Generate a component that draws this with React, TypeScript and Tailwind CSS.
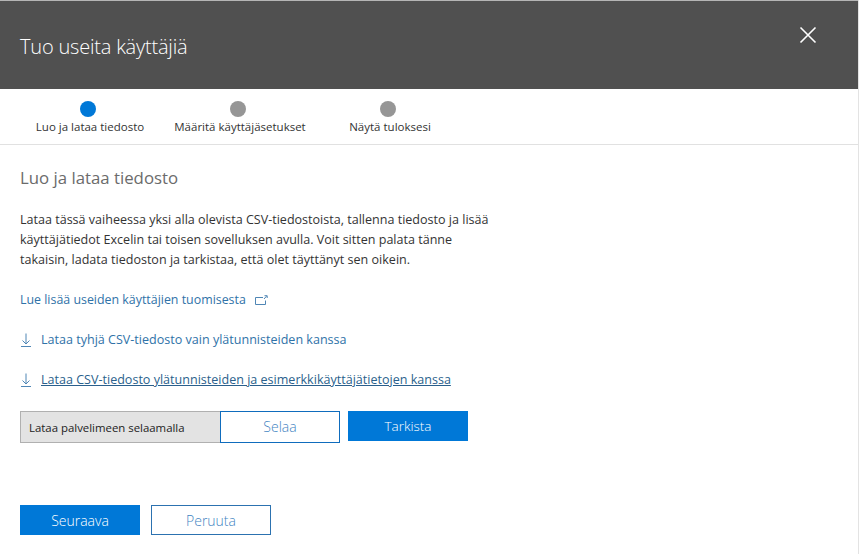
const font = { fontFamily: '"Open Sans", "Noto Sans", sans-serif' };

function DownloadIcon() {
  return (
    <svg width="10" height="14" viewBox="0 0 10 14" fill="none" stroke="#4f86b5" strokeWidth="1" className="shrink-0 ml-px">
      <path d="M5 0.5V11M1.5 7.5L5 11L8.5 7.5M0 13.5H10" />
    </svg>
  );
}

function Step({ label, active }: { label: string; active?: boolean }) {
  return (
    <div className="w-[150px] flex flex-col items-center">
      <div className={`w-4 h-4 mr-1 rounded-full ${active ? "bg-[#0078d7]" : "bg-[#969696]"}`} />
      <div className="mt-px text-[11.5px] leading-[17px] text-[#333] whitespace-nowrap">{label}</div>
    </div>
  );
}

export default function App() {
  return (
    <div className="w-[859px] h-[554px] bg-white overflow-hidden border-r border-[#e3e3e3]" style={font}>
      <header className="h-[89px] bg-[#505050] border-t border-[#b5b5b5] flex items-start justify-between pl-5 pr-[41px]">
        <h1 className="mt-[31px] text-[20px] leading-[30px] font-light text-white tracking-[-0.2px]">Tuo useita käyttäjiä</h1>
        <svg width="18" height="18" viewBox="0 0 18 18" fill="none" stroke="#fff" strokeWidth="1.6" className="mt-[25px]">
          <path d="M1.5 1.5L16.5 16.5M16.5 1.5L1.5 16.5" />
        </svg>
      </header>
      <div className="h-[56px] border-b border-[#e1e1e1] flex pl-[15px] pt-[12px]">
        <Step label="Luo ja lataa tiedosto" active />
        <Step label="Määritä käyttäjäsetukset" />
        <Step label="Näytä tuloksesi" />
      </div>
      <main className="pl-5">
        <h2 className="mt-[21px] text-[16.8px] leading-[24px] text-[#6b6b6b]">Luo ja lataa tiedosto</h2>
        <p className="mt-[20px] w-[490px] text-[12.55px] leading-[20px] text-[#333]">
          Lataa tässä vaiheessa yksi alla olevista CSV-tiedostoista, tallenna tiedosto ja lisää<br />
          käyttäjätiedot Excelin tai toisen sovelluksen avulla. Voit sitten palata tänne<br />
          takaisin, ladata tiedoston ja tarkistaa, että olet täyttänyt sen oikein.
        </p>
        <a className="mt-[20px] flex items-center gap-[9px] text-[12.4px] leading-[20px] text-[#2f72a8]">
          Lue lisää useiden käyttäjien tuomisesta
          <svg width="13" height="10" viewBox="0 0 13 10" fill="none" stroke="#4f86b5" strokeWidth="1">
            <path d="M8 2.5H0.5V9.5H10.5V5.5M9 4L11.5 1.2M9.5 0.7H12.2V3" />
          </svg>
        </a>
        <a className="mt-[20px] flex items-center gap-[10px] text-[12.55px] leading-[20px] text-[#2f72a8]">
          <DownloadIcon />
          Lataa tyhjä CSV-tiedosto vain ylätunnisteiden kanssa
        </a>
        <a className="mt-[20px] flex items-center gap-[10px] text-[12.55px] leading-[20px] text-[#2a5f8c]">
          <DownloadIcon />
          <span className="underline">Lataa CSV-tiedosto ylätunnisteiden ja esimerkkikäyttäjätietojen kanssa</span>
        </a>
        <div className="mt-[21px] flex items-start">
          <div className="w-[200px] h-[32px] bg-[#e3e3e3] border border-[#b0b0b0] border-r-0 pl-[8px] text-[11.4px] leading-[31px] text-[#222]">Lataa palvelimeen selaamalla</div>
          <button className="w-[120px] h-[32px] pb-[2px] border border-[#0f6cbd] bg-white text-[14px] font-light text-[#3f84c2]">Selaa</button>
          <button className="ml-2 w-[120px] h-[30px] pt-px bg-[#0078d7] text-[13.5px] font-light text-white">Tarkista</button>
        </div>
        <div className="mt-[62px] flex gap-[11px]">
          <button className="w-[120px] h-[30px] bg-[#0078d7] text-[14px] font-light text-white">Seuraava</button>
          <button className="w-[120px] h-[30px] border border-[#2c72b0] bg-white text-[14px] font-light text-[#3f84c2]">Peruuta</button>
        </div>
      </main>
    </div>
  );
}
